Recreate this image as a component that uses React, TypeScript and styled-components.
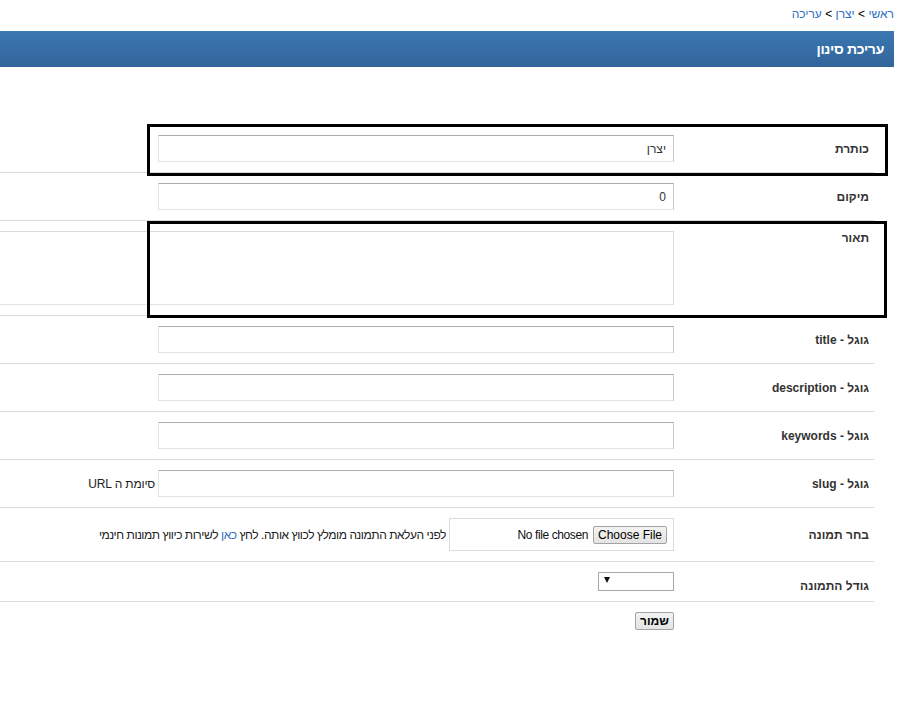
import styled, { createGlobalStyle } from 'styled-components';

const GlobalStyle = createGlobalStyle`
  html, body {
    margin: 0;
    overflow: hidden;
  }
  body {
    padding: 0 7px 0 0;
    direction: rtl;
    font-family: "Liberation Sans", Arial, "DejaVu Sans", sans-serif;
    font-size: 12px;
    color: #222;
    background: #fff;
  }
`;

const Crumbs = styled.div`
  padding-top: 6px;
  font-size: 12px;
  line-height: 16px;
  color: #000;
`;

const CrumbLink = styled.a`
  color: #2f6fc4;
  text-decoration: none;
`;

const TitleBar = styled.div`
  margin-top: 9px;
  height: 36px;
  line-height: 36px;
  padding-right: 10px;
  background: linear-gradient(#3b78b2, #32649a);
  color: #fff;
  font-size: 14px;
  font-weight: bold;
  letter-spacing: -0.3px;
`;

const Form = styled.div`
  margin: 58px 20px 0 0;
`;

const Row = styled.div<{ $align?: string; $last?: boolean }>`
  position: relative;
  display: grid;
  grid-template-columns: 200px minmax(0, 1fr);
  align-items: ${(p) => p.$align || 'center'};
  padding: 10px 0;
  border-bottom: ${(p) => (p.$last ? 'none' : '1px solid #dcdcdc')};
`;

const Label = styled.div<{ $drop?: number }>`
  padding-right: 5px;
  margin-bottom: ${(p) => -(p.$drop || 0)}px;
  font-weight: bold;
  line-height: 14px;
  color: #333;
`;

const Field = styled.div`
  display: flex;
  align-items: center;
  gap: 3px;
  min-width: 0;
`;

const TextInput = styled.input`
  box-sizing: border-box;
  flex-shrink: 0;
  width: 516px;
  height: 27px;
  margin: 0;
  padding: 0 7px;
  border: 1px solid;
  border-color: #ababab #c6c6c6 #e3e3e3 #e3e3e3;
  font: 12px "Liberation Sans", Arial, sans-serif;
  color: #333;
  direction: rtl;
  outline: none;
`;

const TextArea = styled.textarea`
  box-sizing: border-box;
  flex-shrink: 0;
  width: 720px;
  height: 74px;
  margin: 0;
  padding: 4px 7px;
  border: 1px solid;
  border-color: #dcdcdc #dcdcdc #e3e3e3 #e3e3e3;
  font: 12px "Liberation Sans", Arial, sans-serif;
  resize: none;
  outline: none;
`;

const Hint = styled.span<{ $tight?: boolean }>`
  white-space: nowrap;
  color: #222;
  letter-spacing: ${(p) => (p.$tight ? '-0.45px' : '-0.2px')};
`;

const HintLink = styled.a`
  color: #2f6fc4;
  text-decoration: none;
`;

const FileBox = styled.div`
  box-sizing: border-box;
  flex-shrink: 0;
  display: flex;
  align-items: center;
  gap: 5px;
  width: 225px;
  height: 33px;
  padding: 0 6px;
  border: 1px solid #dadada;
  background: #fff;
`;

const Button = styled.button<{ $bold?: boolean }>`
  box-sizing: border-box;
  height: 18px;
  margin: 0;
  padding: 0 4px;
  border: 1px solid #a3a3a3;
  border-radius: 2px;
  background: linear-gradient(#f3f3f3, #e3e3e3);
  font: ${(p) => (p.$bold ? 'bold ' : '')}12px "Liberation Sans", Arial, sans-serif;
  line-height: 16px;
  color: #000;
`;

const FileState = styled.span`
  color: #111;
  white-space: nowrap;
  letter-spacing: -0.4px;
`;

const SelectBox = styled.div`
  box-sizing: border-box;
  display: flex;
  justify-content: flex-end;
  align-items: flex-start;
  width: 76px;
  height: 19px;
  padding: 4px 0 0 5px;
  border: 1px solid #a9a9a9;
  background: #fff;
`;

const Arrow = styled.span`
  width: 0;
  height: 0;
  border-left: 3px solid transparent;
  border-right: 3px solid transparent;
  border-top: 6px solid #111;
`;

const Highlight = styled.div<{ $top: number; $bottom: number; $right: number }>`
  position: absolute;
  left: 147px;
  top: ${(p) => p.$top}px;
  bottom: ${(p) => p.$bottom}px;
  right: ${(p) => p.$right}px;
  border: 3px solid #000;
  pointer-events: none;
`;

const seoFields = ['title', 'description', 'keywords'];

export default function App() {
  return (
    <>
      <GlobalStyle />
      <Crumbs>
        <CrumbLink href="#">ראשי</CrumbLink> &gt; <CrumbLink href="#">יצרן</CrumbLink> &gt;{' '}
        <CrumbLink href="#">עריכה</CrumbLink>
      </Crumbs>
      <TitleBar>עריכת סינון</TitleBar>
      <Form>
        <Row>
          <Label>כותרת</Label>
          <Field>
            <TextInput defaultValue="יצרן" />
          </Field>
          <Highlight $top={-1} $bottom={-4} $right={-14} />
        </Row>
        <Row>
          <Label>מיקום</Label>
          <Field>
            <TextInput defaultValue="0" />
          </Field>
        </Row>
        <Row $align="start">
          <Label>תאור</Label>
          <Field>
            <TextArea />
          </Field>
          <Highlight $top={0} $bottom={-3} $right={-13} />
        </Row>
        {seoFields.map((name) => (
          <Row key={name}>
            <Label>גוגל - {name}</Label>
            <Field>
              <TextInput />
            </Field>
          </Row>
        ))}
        <Row>
          <Label>גוגל - slug</Label>
          <Field>
            <TextInput />
            <Hint>סיומת ה URL</Hint>
          </Field>
        </Row>
        <Row>
          <Label>בחר תמונה</Label>
          <Field>
            <FileBox>
              <Button>Choose File</Button>
              <FileState>No file chosen</FileState>
            </FileBox>
            <Hint $tight>
              לפני העלאת התמונה מומלץ לכווץ אותה. לחץ <HintLink href="#">כאן</HintLink> לשירות
              כיווץ תמונות חינמי
            </Hint>
          </Field>
        </Row>
        <Row $align="end">
          <Label $drop={2}>גודל התמונה</Label>
          <Field>
            <SelectBox>
              <Arrow />
            </SelectBox>
          </Field>
        </Row>
        <Row $last>
          <div />
          <Field>
            <Button $bold>שמור</Button>
          </Field>
        </Row>
      </Form>
    </>
  );
}
